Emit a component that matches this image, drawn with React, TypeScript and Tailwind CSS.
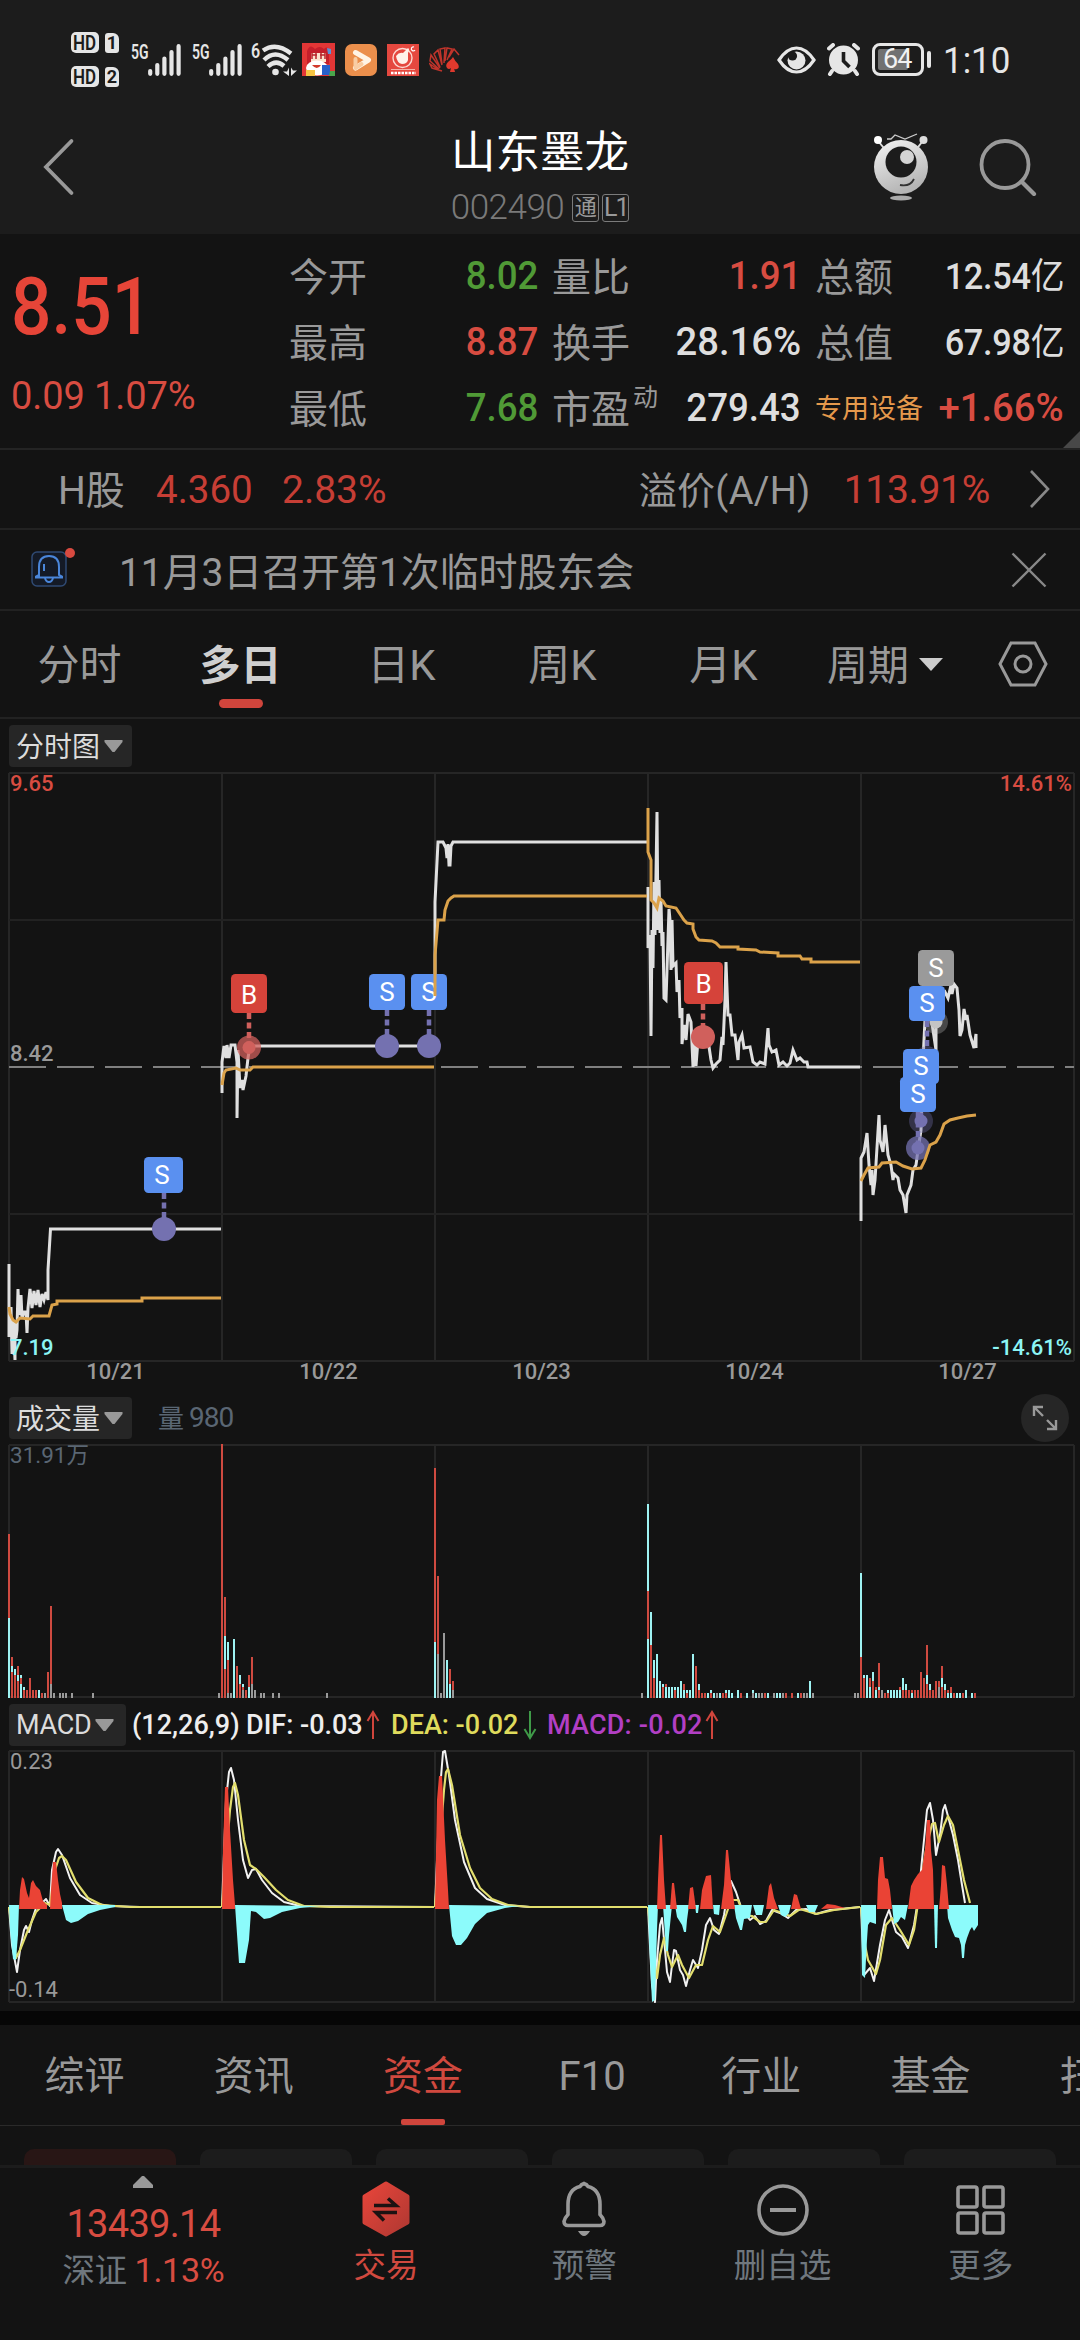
import { type ReactNode } from 'react';

const DAY_X = [9, 222, 435, 648, 861, 1074];
const DATES = ['10/21', '10/22', '10/23', '10/24', '10/27'];

/* ---------- chart data (canvas coordinates) ---------- */

const PRICE = [
  '9,1264 9,1337 11,1307 12,1354 13,1320 15,1360 15,1322 16,1338 17,1330 18,1289 19,1315 21,1295 22,1318 24,1312 26,1312 27,1333 28,1308 30,1289 32,1308 34,1291 36,1305 38,1290 40,1307 42,1294 44,1300 46,1292 48,1300 48,1270 50.5,1229 221,1229',
  '222,1093 222,1062 224,1046 226,1058 227,1045 229,1058 231,1045 235,1045 237,1062 237,1118 238,1050 240,1088 242,1080 243,1090 246,1076 248,1058 250,1046 434,1046',
  '435,985 435,902 438,842 443,842 446,848 447,858 448,844 449,865 450,865 451,846 453,842 647,842',
  '648,887 648,948 650,935 651,1036 652,930 653,968 654,882 655,935 657,812 658,930 659,880 660,933 661,900 662,946 663,932 664,998 666,1000 667,970 669,909 670,920 671,970 672,920 673,966 676,963 677,992 679,980 680,1018 682,1008 682,1044 684,1025 686,1040 688,1014 691,1022 693,1067 694,1040 696,1066 698,1040 702,1030 708,1040 711,1060 713,1068 716,1064 720,1060 722,1037 723,1045 725,1000 726,962 728,1015 730,1015 732,1035 735,1035 738,1060 739,1042 742,1035 744,1048 750,1047 753,1062 757,1065 760,1062 765,1064 767,1040 768,1028 769,1045 772,1052 776,1050 779,1065 783,1062 787,1066 790,1063 793,1050 797,1060 800,1058 804,1062 807,1062 808,1067 860,1067',
  '861,1221 861,1158 864,1152 867,1133 869,1165 871,1185 872,1170 873,1195 875,1180 879,1115 880,1140 883,1152 885,1125 888,1155 891,1165 893,1180 894,1174 898,1178 900,1190 903,1195 906,1213 907,1195 911,1185 913,1170 916,1165 918,1150 921,1130 923,1060 925,1020 930,1010 936,1050 936,1000 945,992 948,998 951,985 952,994 954,984 957,988 959,1010 960,1036 962,1030 964,1009 966,1020 967,1015 970,1035 974,1048 976,1034 976,1048',
];

const AVERAGE = [
  '9,1307 10,1314 13,1320 16,1322 20,1318 30,1319 33,1316 49,1316 52,1305 57,1304 57,1301 142,1301 142,1298 221,1298',
  '222,1085 224,1073 226,1070 236,1068 240,1070 250,1070 253,1067 434,1067',
  '435,996 435,955 438,920 444,920 445,910 448,901 451,898 454,896 647,896',
  '648,808 648,852 651,860 651,900 654,903 657,908 659,898 663,901 666,906 676,908 680,914 684,920 687,923 693,924 693,929 696,937 699,940 712,941 716,943 720,947 738,947 738,949 756,950 760,952 778,953 778,956 800,956 802,959 811,959 811,962 860,962',
  '861,1181 864,1175 868,1168 879,1167 882,1163 896,1162 903,1166 912,1169 921,1168 925,1160 930,1145 936,1142 940,1135 944,1124 950,1120 958,1118 967,1116 976,1115',
];

// x:segments, each segment is colour + height, painted back to front
const VOLUME = `9:r164c80 12:r41c32r26 15:c29r23 18:r32c23r17 21:c23r20c14 24:c11r8 27:r8 30:r20 33:r8 36:r8 39:c8 42:r5 45:g5
48:r26 51:r92g14 54:g5 60:g5 63:g5 66:g5 72:g5 93:g5
219:g5 222:r254 225:r101c62r29 228:c56r38g5 231:g5 234:c59 237:r32 240:c23r14 243:c14r11g8 246:r8 249:r23c11 252:r41g14 255:g8
261:g5 264:g5 273:g5 279:g5 327:g5
435:r230c56 438:r122g44 441:g5 444:g65 447:c38 450:r29c14 453:r17g8
642:g5 648:c194r107c59 651:c86r53 654:c38r20 657:c44 660:c17 663:c14r11 666:r14c11 669:c11 672:c11 675:c11r8 678:c11 681:c17
684:r14c8 687:c8r5 690:c8 693:c44 696:r32 699:c14r8 702:r5 705:r5 708:c5 711:c8r5 714:c5 717:g5 720:c5 723:r5 726:c8r5 729:c8
732:c5 738:c8 741:r5 747:c5 753:c8g5 756:c5 759:g5 762:g5 765:r5 768:c5 774:g5 777:c5 780:c5 783:g5 786:r5 792:r5 798:c5 801:r5
804:g5 807:g5 810:c17 813:g5
855:g5 858:g5 861:c125r41 864:c23r20 867:c23 870:r20c11 873:c26r17 876:r11c8 879:r35c11r8 882:g8 885:r5 888:c8r5 891:c8 894:c8
897:c8 900:r11c8 903:c20r8 906:c14r8 909:r8 912:r8c5 915:r8 918:r8 921:r26 924:r20 927:r53c23r14 930:c14r8 933:r8 936:r17
939:r17g11 942:r32c20r11 945:c14r8 948:r8c5 951:r11c5 954:r5 957:c5 960:c5 963:r5 966:c8 972:c5 975:r5`;

const FILL: Record<string, string> = { r: '#cf4a40', c: '#9ff3f3', g: '#9a9a9a' };

const MACD_DOWN = [
  '9,1905 10,1930 13,1959 16,1960 18,1935 19,1905',
  '62,1905 66,1920 71,1923 78,1921 88,1914 100,1910 115,1907 115,1905',
  '235,1905 239,1963 245,1963 249,1940 251,1911 256,1912 264,1919 270,1918 282,1912 300,1908 320,1906',
  '449,1905 452,1936 456,1945 461,1945 467,1938 475,1924 487,1913 505,1908 520,1906',
  '648,1905 649,1940 652,2002 655,2000 657,1930 658,1905',
  '663,1905 665,1935 666,1951 668,1951 669,1935 672,1905',
  '675,1905 677,1917 682,1925 684,1932 686,1932 687,1920 689,1905',
  '695,1905 696,1913 698,1913 699,1905',
  '713,1905 714,1914 719,1915 720,1905',
  '734,1905 736,1918 740,1930 742,1930 744,1919 750,1918 752,1905',
  '753,1905 756,1915 762,1915 764,1905',
  '778,1905 781,1915 785,1917 789,1913 791,1905',
  '806,1905 809,1912 815,1912 818,1905',
  '861,1905 862,1975 865,1978 867,1940 868,1925 870,1922 876,1924 876,1905',
  '892,1905 894,1924 898,1922 901,1917 905,1920 908,1905',
  '934,1905 935,1948 937,1948 938,1905',
  '947,1905 948,1918 952,1930 955,1937 959,1938 961,1945 962,1958 964,1958 965,1945 967,1938 970,1930 972,1927 974,1931 978,1925 978,1905',
];

const MACD_UP = [
  '19,1909 20,1890 22,1877 24,1879 27,1893 29,1898 31,1883 33,1880 36,1886 40,1890 43,1901 47,1905 47,1909',
  '50,1909 51,1890 53,1862 56,1862 58,1880 60,1894 62,1903 62,1909',
  '222,1909 223,1850 225,1787 228,1787 230,1830 233,1880 235,1905 235,1909',
  '435,1909 437,1800 439,1776 442,1776 445,1840 448,1890 449,1909',
  '657,1909 658,1880 660,1835 662,1835 664,1880 666,1909',
  '670,1909 672,1883 674,1883 677,1909',
  '688,1909 690,1888 693,1887 696,1909',
  '700,1909 702,1890 706,1876 711,1875 713,1909',
  '721,1909 724,1885 726,1850 728,1850 731,1880 735,1909',
  '766,1909 769,1886 771,1883 774,1898 778,1909',
  '791,1909 794,1894 797,1895 801,1909',
  '821,1909 827,1904 835,1905 845,1908',
  '877,1909 878,1880 880,1857 883,1857 885,1878 888,1879 890,1890 892,1909',
  '908,1909 911,1886 914,1880 918,1874 922,1870 925,1850 927,1820 930,1820 931,1850 933,1870 934,1909',
  '939,1909 941,1885 942,1865 945,1866 947,1885 949,1909',
];

const DIF = [
  '9,1907 12,1945 17,1972 20,1950 24,1930 26,1926 29,1932 32,1920 36,1908 42,1903 46,1899 50,1906 52,1870 56,1852 58,1849 62,1855 70,1878 80,1895 92,1903 110,1906 140,1907 221,1907',
  '222,1907 226,1800 229,1772 231,1768 234,1780 238,1820 243,1860 248,1878 252,1870 256,1869 262,1880 272,1893 284,1902 300,1906 434,1907',
  '435,1907 440,1790 443,1752 445,1751 449,1775 455,1820 464,1862 475,1888 487,1899 505,1905 530,1907 647,1907',
  '648,1907 652,1985 655,2002 657,1960 660,1925 662,1918 665,1950 667,1972 670,1982 672,1965 674,1950 676,1951 680,1970 683,1975 686,1986 690,1970 693,1960 698,1968 702,1950 706,1925 710,1918 714,1930 719,1934 724,1915 728,1890 731,1881 736,1892 742,1910 750,1920 755,1916 760,1924 766,1921 772,1910 780,1913 788,1918 796,1910 806,1909 816,1914 830,1910 860,1907',
  '861,1907 864,1975 870,1968 874,1981 880,1945 885,1920 889,1910 892,1920 896,1932 902,1937 908,1948 914,1925 918,1900 924,1840 927,1810 930,1803 933,1820 936,1855 940,1835 943,1810 945,1805 949,1820 953,1835 958,1860 962,1885 965,1903',
];

const DEA = [
  '9,1907 16,1958 20,1950 28,1930 36,1912 45,1903 50,1905 55,1870 59,1858 62,1856 66,1860 76,1882 88,1898 102,1905 130,1907 221,1907',
  '222,1907 230,1810 233,1787 235,1783 238,1795 244,1840 250,1865 256,1869 264,1877 276,1890 288,1900 304,1906 330,1907 434,1907',
  '435,1907 444,1790 446,1772 448,1769 452,1785 460,1835 470,1868 480,1888 492,1899 508,1905 530,1907 647,1907',
  '648,1907 654,1960 657,1978 660,1955 664,1938 668,1955 672,1967 678,1955 682,1965 689,1978 696,1965 702,1965 708,1940 713,1926 720,1932 726,1915 731,1900 738,1900 744,1915 752,1916 760,1922 766,1922 774,1910 782,1913 790,1916 800,1909 816,1914 834,1910 860,1907',
  '861,1907 864,1940 868,1960 876,1974 880,1960 886,1925 892,1918 900,1930 909,1945 914,1930 920,1890 926,1850 932,1824 935,1823 939,1842 944,1825 948,1816 953,1825 958,1850 964,1880 970,1903',
];

/* ---------- status bar ---------- */

function SimBadge({ n }: { n: number }) {
  return (
    <div className="flex h-[20px] items-center gap-[6px]">
      <span className="flex h-[21px] w-[28px] items-center justify-center rounded-[5px] bg-[#e6e6e6] text-[#1c1c1c]">
        <span className="scale-x-[0.85] text-[20px] font-semibold leading-[20px]">HD</span>
      </span>
      <span className="flex h-[20px] w-[14px] items-center justify-center rounded-[3px] rounded-tr-[6px] bg-[#e6e6e6] text-[18px] font-bold leading-[20px] text-[#1c1c1c]">
        {n}
      </span>
    </div>
  );
}

function Signal() {
  return (
    <div className="flex h-[32px] w-[50px] items-start">
      <span className="w-[17px] origin-left scale-x-[0.7] text-[20px] font-semibold leading-[16px] text-[#e6e6e6]">5G</span>
      <svg className="h-[32px] w-[33px] shrink-0" viewBox="0 0 33 32">
        <g stroke="#e6e6e6" strokeWidth="4.2" strokeLinecap="round">
          <path d="M2.2 27v2.8M9.3 21v8.8M16.4 14.5v15.3M23.5 8v21.8M30.6 2.2v27.6" />
        </g>
      </svg>
    </div>
  );
}

function StatusBar() {
  return (
    <div className="flex h-[119px] items-center pl-[71px] pr-[73px]">
      <div className="flex flex-col gap-[14px]">
        <SimBadge n={1} />
        <SimBadge n={2} />
      </div>
      <div className="ml-[12px] flex gap-[11px]">
        <Signal />
        <Signal />
      </div>
      <div className="ml-[9px] flex h-[34px] items-start">
        <span className="w-[9px] origin-left scale-x-[0.8] text-[20px] font-semibold leading-[16px] text-[#e6e6e6]">6</span>
        <svg className="h-[34px] w-[37px]" viewBox="9 0 37 34">
          <g fill="none" stroke="#e6e6e6" strokeWidth="4.4">
            <path d="M12 7.5Q25 -1.500 40 10.500" />
            <path d="M13 17Q24 6 37 17" />
            <path d="M17 23.500Q25 16 33 23" />
          </g>
          <circle cx="24.500" cy="29" r="3.300" fill="#e6e6e6" />
          <path d="M38 24.500v8.500l-6-4.500h4zM40 24.500v8.500l6-5.500h-4z" fill="#e6e6e6" />
        </svg>
      </div>
      <svg className="ml-[5px] size-[33px]" viewBox="0 0 33 33">
        <path d="M0 0h33v33H0z" fill="#e23636" />
        <path d="M5 8q3-8 8-2 5-4 9 0 4-4 5 3v12H5z" fill="#c41f2b" />
        <path d="M9 10h15v9H9z" fill="#fbe3cf" />
        <path d="M10 10v6M14 9v7M19 9v7M23 10v6M10 12h5M18 12h5" stroke="#b8262c" strokeWidth="1.500" />
        <ellipse cx="15" cy="25" rx="11" ry="7.500" fill="#fff" />
        <path d="M10 22h9q-4 6-9 0z" fill="#d13a2c" />
        <path d="M4 27h9v6H4z" fill="#f5c443" />
        <path d="M20 22h8v10h-8z" fill="#2760c9" />
        <path d="M28 28h5v5h-6z" fill="#4aa54b" />
        <path d="M25 5l4 1v5h-3z" fill="#5c92d6" />
      </svg>
      <svg className="ml-[10px] size-[32px]" viewBox="0 0 32 32">
        <rect width="32" height="32" rx="7" fill="#eb8f4c" />
        <path d="M10.500 8.500L23.500 16 10.500 24" fill="none" stroke="#fff4e6" strokeWidth="5" strokeLinejoin="round" strokeLinecap="round" />
        <path d="M10.500 15v9l6-4" fill="none" stroke="#f9cda3" strokeWidth="4" strokeLinejoin="round" strokeLinecap="round" />
      </svg>
      <svg className="ml-[10px] size-[32px]" viewBox="0 0 32 32">
        <path d="M0 0h32v32H0z" fill="#e5483f" />
        <circle cx="15.500" cy="14" r="9.500" fill="none" stroke="#fbd9d2" strokeWidth="1.400" />
        <path d="M9 12q3-4 7-3l5-5q2 1 0 5l0 7q-1 4-6 4-5-1-6-8z" fill="#fff2ea" />
        <path d="M27 3a2 2 0 1 0 1 3" fill="none" stroke="#fff" strokeWidth="1.200" />
        <path d="M4 25.500h24" stroke="#f5b1a6" />
        <path d="M4 29h25" stroke="#fff" strokeWidth="2.500" strokeDasharray="2.500 1" />
      </svg>
      <svg className="ml-[10px] h-[28px] w-[32px]" viewBox="0 0 32 28">
        <g fill="none" stroke="#c0342b" strokeWidth="1.500">
          <path d="M13 25L3 22l-2-4 9 6M10 23L1 15l1-6 9 13M11 21L5 8l4-4 4 15M13 18L11 3l5-1-1 15M16 15l2-13 5 1-5 11M20 11l5-8 5 6" />
        </g>
        <path d="M24 11q2 4 5 7 2 4-1 5-3 1-3-1l1 4h-5l1-4q-2 2-4 0-2-3 1-6 4-3 5-5z" fill="#df392d" />
      </svg>

      <div className="ml-auto flex items-center">
        <svg className="h-[28px] w-[39px]" viewBox="0 0 39 28">
          <path d="M2 14Q10 2 19.500 2T37 14Q29 26 19.500 26T2 14z" fill="none" stroke="#e6e6e6" strokeWidth="3.200" />
          <circle cx="19.500" cy="14.500" r="9" fill="#e6e6e6" />
          <circle cx="15.500" cy="10" r="4.600" fill="#1c1c1c" />
        </svg>
        <svg className="ml-[11px] size-[33px]" viewBox="0 0 33 33">
          <circle cx="16.500" cy="17" r="14.500" fill="#e6e6e6" />
          <path d="M2 5.500L6 2M27 2l4 3.500M5 28l-2 3M28 28l2 3" stroke="#e6e6e6" strokeWidth="4" strokeLinecap="round" />
          <path d="M16.500 9v9l6 6" fill="none" stroke="#1c1c1c" strokeWidth="3.600" />
        </svg>
        <div className="ml-[12px] flex h-[33px] w-[52px] items-center rounded-[8px] border-[3px] border-[#e6e6e6] p-[3px]">
          <div className="flex h-[21px] w-[30px] items-center rounded-[2px] bg-[#717171] pl-[5px] text-[27px] leading-[21px] tracking-[-1px] text-[#f2f2f2]">64</div>
        </div>
        <div className="ml-[3px] h-[17px] w-[4px] rounded-full bg-[#e6e6e6]" />
        <span className="ml-[12px] w-[64px] origin-left scale-x-[0.97] pt-[3px] text-[36px] leading-[40px] text-[#e6e6e6]">1:10</span>
      </div>
    </div>
  );
}

/* ---------- title bar ---------- */

function TitleBar() {
  return (
    <div className="grid h-[115px] grid-cols-[1fr_auto_1fr] items-start">
      <div className="flex h-[95px] items-center pl-[42px]">
        <svg className="h-[58px] w-[34px]" viewBox="0 0 34 58" fill="none" stroke="#999" strokeWidth="3.800" strokeLinecap="round">
          <path d="M29.500 3L4 29l25.500 26" />
        </svg>
      </div>
      <div className="flex flex-col items-center pt-[6px]">
        <h1 className="text-[44.500px] leading-[56px] text-white">山东墨龙</h1>
        <div className="flex h-[53px] items-center gap-[3px]">
          <span className="mr-[5px] text-[35px] font-light leading-[53px] tracking-[-0.500px] text-[#7a7a7a]">002490</span>
          <span className="flex h-[28px] w-[27px] items-center justify-center rounded-[3px] border border-[#7b7b7b] text-[22px] leading-[26px] text-[#999]">通</span>
          <span className="flex h-[28px] w-[27px] items-center justify-center rounded-[3px] border border-[#7b7b7b] text-[25px] leading-[26px] tracking-[-2px] text-[#999]">L1</span>
        </div>
      </div>
      <div className="flex h-[95px] items-center justify-end pr-[43px]">
        <svg className="h-[68px] w-[56px]" viewBox="0 0 56 68">
          <defs>
            <linearGradient id="robot" x1="0" y1="0" x2="0.400" y2="1">
              <stop offset="0" stopColor="#f4f4f4" />
              <stop offset="1" stopColor="#b5b5b5" />
            </linearGradient>
          </defs>
          <path d="M6 9l8 10M49 9l-7 9" stroke="#ddd" strokeWidth="2" />
          <path d="M14 6h4l4-4 10 4 12-5" fill="none" stroke="#ccc" strokeWidth="1.300" />
          <circle cx="5" cy="7" r="4" fill="#fff" />
          <circle cx="50.500" cy="7" r="4" fill="#ddd" />
          <circle cx="28" cy="34" r="27" fill="url(#robot)" />
          <circle cx="28" cy="29" r="15.500" fill="#1c1c1c" />
          <circle cx="34" cy="24" r="7" fill="#d4d4d4" />
          <path d="M27 52q10 2 14-6" fill="none" stroke="#333" strokeWidth="1.800" />
          <ellipse cx="28" cy="65" rx="11" ry="2.500" fill="#aaa" />
        </svg>
        <svg className="ml-[50px] size-[58px]" viewBox="0 0 58 58" fill="none" stroke="#999" strokeWidth="3.800">
          <circle cx="26" cy="26.500" r="23.500" />
          <path d="M42.500 43.500L55 56" strokeWidth="4.200" strokeLinecap="round" />
        </svg>
      </div>
    </div>
  );
}

/* ---------- quote ---------- */

type StatProps = { label: string; value: ReactNode; color: string; sup?: string; small?: boolean; wide?: boolean };

function Stat({ label, value, color, sup, small, wide }: StatProps) {
  return (
    <div className="flex h-[66px] items-center justify-between">
      <span className={small ? 'whitespace-nowrap pt-[3px] text-[27px] leading-[40px] text-[#e5994c]' : 'whitespace-nowrap pt-[6px] text-[39px] leading-[40px] text-[#999]'}>
        {label}
        {sup && <sup className="relative top-[-17px] ml-[3px] align-baseline text-[25px] leading-none">{sup}</sup>}
      </span>
      <span className={`origin-right whitespace-nowrap pt-[2px] text-[39px] font-medium leading-[40px] ${wide ? 'scale-x-[0.98]' : 'scale-x-[0.94]'} ${color}`}>{value}</span>
    </div>
  );
}

const yi = (n: string) => (
  <span className="text-[36.500px] tracking-[-0.300px]">
    {n}
    <span className="text-[36px] font-normal">亿</span>
  </span>
);

function Quote() {
  return (
    <section className="relative flex h-[216px] border-b-2 border-[#242424] pr-[16px]">
      <div className="w-[289px] pl-[11px]">
        <div className="mt-[28px] h-[90px] origin-left scale-x-[0.89] text-[80px] font-medium leading-[90px] text-[#e64538]">8.51</div>
        <div className="mt-[24px] text-[38px] leading-[40px] tracking-[-0.100px] text-[#d84c41]">0.09 1.07%</div>
      </div>
      <div className="w-[249px] pt-[8px]">
        <Stat label="今开" value="8.02" color="text-[#509a36]" />
        <Stat label="最高" value="8.87" color="text-[#d84c41]" />
        <Stat label="最低" value="7.68" color="text-[#509a36]" />
      </div>
      <div className="ml-[14px] w-[249px] pt-[8px]">
        <Stat label="量比" value="1.91" color="text-[#d84c41]" />
        <Stat label="换手" value="28.16%" color="text-[#dedede]" wide />
        <Stat label="市盈" sup="动" value="279.43" color="text-[#dedede]" />
      </div>
      <div className="ml-[14px] w-[249px] pt-[8px]">
        <Stat label="总额" value={yi('12.54')} color="text-[#dedede]" />
        <Stat label="总值" value={yi('67.98')} color="text-[#dedede]" />
        <Stat label="专用设备" small value="+1.66%" color="text-[#d84c41]" wide />
      </div>
      <svg className="absolute bottom-0 right-0 size-[17px]" viewBox="0 0 17 17">
        <path d="M17 0v17H0z" fill="#484848" />
      </svg>
    </section>
  );
}

function HShareRow() {
  return (
    <div className="flex h-[80px] items-center border-b-2 border-[#222] pl-[58px] pr-[29px] text-[39px] leading-[44px]">
      <span className="w-[98px] pt-[4px] text-[39px] text-[#999]">H股</span>
      <span className="w-[126px] pt-[2px] text-[38.500px] text-[#c63e35]">4.360</span>
      <span className="pt-[2px] text-[#c63e35]">2.83%</span>
      <span className="ml-auto pt-[4px] text-[38px] tracking-[0.300px] text-[#999]">溢价(A/H)</span>
      <span className="ml-[33px] pt-[2px] tracking-[-0.300px] text-[#c63e35]">113.91%</span>
      <svg className="ml-[39px] h-[40px] w-[22px]" viewBox="0 0 22 40" fill="none" stroke="#888" strokeWidth="2.600">
        <path d="M2 2l17 18L2 38" />
      </svg>
    </div>
  );
}

function NoticeRow() {
  return (
    <div className="flex h-[81px] items-center border-b-2 border-[#222] pl-[31px] pr-[33px]">
      <svg className="mb-[3px] h-[42px] w-[46px]" viewBox="0 0 46 42">
        <rect x="1" y="5" width="34" height="34" rx="5" fill="#141a26" stroke="#2f4a73" strokeWidth="1.500" />
        <path d="M8 30V20q0-11 10-11t10 11v8l3 1.500v1H5v-1L8 28" fill="none" stroke="#4a86da" strokeWidth="2" />
        <path d="M14 31q1 4 4 4t4-4M13 17v7" fill="none" stroke="#4a86da" strokeWidth="2" />
        <circle cx="39" cy="6" r="5" fill="#d84a40" />
      </svg>
      <span className="ml-[42px] pt-[6px] text-[39px] leading-[44px] tracking-[-0.100px] text-[#999]">11月3日召开第1次临时股东会</span>
      <svg className="ml-auto size-[36px]" viewBox="0 0 36 36" stroke="#888" strokeWidth="2.400">
        <path d="M1.500 1.500l33 33M34.500 1.500l-33 33" />
      </svg>
    </div>
  );
}

function PeriodTabs() {
  const tabs = ['分时', '多日', '日K', '周K', '月K'];
  return (
    <div className="flex h-[108px] items-center border-b-2 border-[#222]">
      {tabs.map((t) => (
        <div key={t} className="relative flex h-full w-[161px] items-center justify-center pt-[3px] pr-[2px]">
          <span className={t === '多日' ? 'text-[41px] font-bold leading-[44px] text-[#cfcfcf]' : 'text-[42px] leading-[44px] text-[#999]'}>{t}</span>
          {t === '多日' && <i className="absolute bottom-[9px] left-[58px] h-[9px] w-[44px] rounded-full bg-[#d0453c]" />}
        </div>
      ))}
      <div className="ml-[22px] flex items-center gap-[10px]">
        <span className="pt-[3px] text-[41px] leading-[44px] text-[#999]">周期</span>
        <svg className="h-[13px] w-[24px]" viewBox="0 0 24 13">
          <path d="M0 0h24L12 13z" fill="#ccc" />
        </svg>
      </div>
      <svg className="ml-[55px] h-[46px] w-[50px]" viewBox="0 0 50 46" fill="none" stroke="#999" strokeWidth="3">
        <path d="M13 2h24l11 21-11 21H13L2 23z" />
        <circle cx="25" cy="23" r="8" />
      </svg>
    </div>
  );
}

/* ---------- charts ---------- */

function Chip({ children, className }: { children: ReactNode; className?: string }) {
  return (
    <div className={`flex h-[42px] items-center gap-[4px] rounded-[4px] bg-[#262626] pl-[7px] leading-[36px] text-[#dcdcdc] ${className}`}>
      {children}
      <svg className="h-[12px] w-[19px]" viewBox="0 0 18 12">
        <path d="M0 0h18v2L10 12H8L0 2z" fill="#999" />
      </svg>
    </div>
  );
}

function Frame({ top, bottom }: { top: number; bottom: number }) {
  return (
    <g stroke="#262626" strokeWidth="2">
      <path d={`M9 ${top}H1074M9 ${bottom}H1074`} />
      {DAY_X.map((x) => (
        <path key={x} d={`M${x} ${top}V${bottom}`} />
      ))}
    </g>
  );
}

type Mark = { x: number; y: number; w: number; h: number; t: string; bg: string; dx: number; dy: number; dot: string; halo: number };

const MARKS: Mark[] = [
  { x: 144, y: 1157, w: 39, h: 36, t: 'S', bg: '#5a90f0', dx: 164, dy: 1229, dot: '#7471b0', halo: 1 },
  { x: 231, y: 974, w: 36, h: 39, t: 'B', bg: '#d5433a', dx: 249, dy: 1047.5, dot: '#d0605c', halo: 0.75 },
  { x: 369, y: 974, w: 36, h: 36, t: 'S', bg: '#5a90f0', dx: 387, dy: 1046, dot: '#7471b0', halo: 1 },
  { x: 411, y: 974, w: 36, h: 36, t: 'S', bg: '#5a90f0', dx: 429, dy: 1046, dot: '#7471b0', halo: 1 },
  { x: 684, y: 962, w: 39, h: 42, t: 'B', bg: '#d5433a', dx: 703, dy: 1037, dot: '#d0605c', halo: 1 },
  { x: 918, y: 950, w: 36, h: 36, t: 'S', bg: '#9a9a9a', dx: 936, dy: 1022, dot: '#c4c4c4', halo: 0.3 },
  { x: 909, y: 986, w: 36, h: 35, t: 'S', bg: '#5a90f0', dx: 927, dy: 1058, dot: '#7471b0', halo: 0.4 },
  { x: 903, y: 1049, w: 36, h: 35, t: 'S', bg: '#5a90f0', dx: 921, dy: 1121, dot: '#7471b0', halo: 0.35 },
  { x: 900, y: 1077, w: 36, h: 35, t: 'S', bg: '#5a90f0', dx: 918, dy: 1148, dot: '#7471b0', halo: 0.75 },
];

function PriceChart() {
  return (
    <svg className="block h-[620px] w-full" viewBox="0 768 1080 620">
      <Frame top={773} bottom={1361} />
      <path d="M9 920H1074M9 1214H1074" stroke="#222" strokeWidth="2" />
      <path d="M9 1067H1074" stroke="#808080" strokeWidth="1.800" strokeDasharray="37 11" />
      <g fill="none" stroke="#e0e0e0" strokeWidth="3">
        {PRICE.map((p) => (
          <polyline key={p} points={p} />
        ))}
      </g>
      {MARKS.map((m, i) => (
        <g key={i}>
          <path d={`M${m.dx} ${m.y + m.h}V${m.dy}`} stroke={m.dot} strokeWidth="4.500" strokeDasharray="6 3.500" />
          <circle cx={m.dx} cy={m.dy} r="12" fill={m.dot} opacity={m.halo} />
          {m.halo < 1 && <circle cx={m.dx} cy={m.dy} r="6.500" fill={m.dot} />}
        </g>
      ))}
      {MARKS.map((m, i) => (
        <g key={i}>
          <rect x={m.x} y={m.y} width={m.w} height={m.h} rx="4.500" fill={m.bg} />
          <text x={m.x + m.w / 2 - (i === 0 ? 1.5 : 0)} y={m.y + m.h / 2 + (m.t === 'B' ? 10 : 8.5)} textAnchor="middle" fill="#fff" fontSize="26">
            {m.t}
          </text>
        </g>
      ))}
      <g fill="none" stroke="#dba24a" strokeWidth="3">
        {AVERAGE.map((p) => (
          <polyline key={p} points={p} />
        ))}
      </g>
      <g fontSize="22" fontWeight="500">
        <text x="10" y="791" fill="#d84c41">9.65</text>
        <text x="1072" y="791" fill="#d84c41" textAnchor="end">14.61%</text>
        <text x="10" y="1061" fill="#999">8.42</text>
        <text x="10" y="1355" fill="#8cf5f5">7.19</text>
        <text x="1072" y="1355" fill="#8cf5f5" textAnchor="end">-14.61%</text>
        {DATES.map((d, i) => (
          <text key={d} x={115.5 + i * 213} y="1379" fill="#999" textAnchor="middle">
            {d}
          </text>
        ))}
      </g>
    </svg>
  );
}

function VolumeChart() {
  const bars = VOLUME.split(/\s+/).flatMap((item) => {
    const [x, segs] = item.split(':');
    return [...segs.matchAll(/([rcg])(\d+)/g)].map((s) => ({ x: Number(x), c: s[1], h: Number(s[2]) }));
  });
  return (
    <svg className="block h-[262px] w-full" viewBox="0 1441 1080 262">
      <Frame top={1445} bottom={1697} />
      {bars.map((b, i) => (
        <rect key={i} x={b.x - 1} y={1698 - b.h} width="2" height={b.h} fill={FILL[b.c]} shapeRendering="crispEdges" />
      ))}
      <text x="10" y="1463" fill="#5a6673" fontSize="22.500">31.91万</text>
    </svg>
  );
}

function MacdChart() {
  return (
    <svg className="block h-[264px] w-full" viewBox="0 1747 1080 264">
      <Frame top={1751} bottom={2002} />
      <g fill="none" stroke="#f2f2f2" strokeWidth="2">
        {DIF.map((p) => (
          <polyline key={p} points={p} strokeLinejoin="round" />
        ))}
      </g>
      <g fill="none" stroke="#e2de6e" strokeWidth="2.200">
        {DEA.map((p) => (
          <polyline key={p} points={p} strokeLinejoin="round" />
        ))}
      </g>
      {MACD_DOWN.map((p) => (
        <polygon key={p} points={p} fill="#8cfbfb" />
      ))}
      {MACD_UP.map((p) => (
        <polygon key={p} points={p} fill="#ea4335" />
      ))}
      <g fill="#999" fontSize="22">
        <text x="10" y="1769">0.23</text>
        <text x="9" y="1997">-0.14</text>
      </g>
    </svg>
  );
}

function Arrow({ up }: { up?: boolean }) {
  return (
    <svg className="h-[30px] w-[14px] shrink-0" viewBox="0 0 14 30" fill="none" stroke={up ? '#d0453c' : '#3f9a48'} strokeWidth="2">
      {up ? <path d="M7 29V2M1.500 11L7 2l5.500 9" /> : <path d="M7 1v27M1.500 19L7 28l5.500-9" />}
    </svg>
  );
}

/* ---------- bottom ---------- */

function SectionTabs() {
  const tabs = ['综评', '资讯', '资金', 'F10', '行业', '基金', '扫雷'];
  return (
    <div className="flex h-[101px] overflow-hidden border-b border-[#2a2a2a]">
      {tabs.map((t) => (
        <div key={t} className={`relative flex h-full w-[169.200px] shrink-0 items-center justify-center pt-[4px] text-[40px] leading-[44px] ${t === '资金' ? 'text-[#d0493f]' : 'text-[#999]'}`}>
          {t}
          {t === '资金' && <i className="absolute bottom-0 left-[63px] h-[6px] w-[44px] rounded-[2px] bg-[#d0453c]" />}
        </div>
      ))}
    </div>
  );
}

function NavItem({ label, children, active }: { label: string; children: ReactNode; active?: boolean }) {
  return (
    <div className="flex w-[198.500px] flex-col items-center pt-[12px]">
      <svg className="h-[58px] w-[58px]" viewBox="0 0 58 58" fill="none" stroke="#999" strokeWidth="3.600">
        {children}
      </svg>
      <span className={`mt-[8px] text-[32.500px] leading-[40px] ${active ? 'text-[#d0493f]' : 'text-[#6f777e]'}`}>{label}</span>
    </div>
  );
}

function BottomNav() {
  return (
    <nav className="flex h-[175px] border-t-[3px] border-[#1c1c1c]">
      <div className="flex w-[287px] flex-col items-center pt-[8px]">
        <svg className="h-[12px] w-[20px]" viewBox="0 0 20 12">
          <path d="M9 0h2l9 9v3H0V9z" fill="#999" />
        </svg>
        <span className="mt-[15px] text-[38px] leading-[42px] tracking-[-0.700px] text-[#d84c41]">13439.14</span>
        <span className="mt-[5px] text-[32.500px] leading-[40px] tracking-[-0.300px] text-[#6f777e]">
          深证 <span className="text-[34px] text-[#d84c41]">1.13%</span>
        </span>
      </div>
      <NavItem label="交易" active>
        <defs>
          <linearGradient id="trade" x1="0" y1="0" x2="1" y2="1">
            <stop offset="0" stopColor="#e8453a" />
            <stop offset="1" stopColor="#b03832" />
          </linearGradient>
        </defs>
        <path d="M29 3.500l21.500 13v26L29 54.500 7.500 42.500v-26z" fill="url(#trade)" stroke="url(#trade)" strokeWidth="4" strokeLinejoin="round" />
        <path d="M17 25.500h22l-8-7M40 32.500H19l8 8" stroke="#1c1212" strokeWidth="3.500" />
      </NavItem>
      <NavItem label="预警">
        <path d="M29 3.500q3 1 4 3 12 3 12 18v10q3 3 4 7 0 4-4 4H13q-4 0-4-4 1-4 4-7v-10q0-15 12-18 1-2 4-3z" />
        <path d="M23 51h12q-3 5-6 5t-6-5z" fill="#999" stroke="none" />
      </NavItem>
      <NavItem label="删自选">
        <circle cx="29" cy="30" r="24" />
        <path d="M16 30h26" strokeWidth="4" />
      </NavItem>
      <NavItem label="更多">
        <rect x="6" y="7" width="19" height="20" rx="2" />
        <rect x="32" y="7" width="19" height="20" rx="2" />
        <rect x="6" y="33" width="19" height="20" rx="2" />
        <rect x="32" y="33" width="19" height="20" rx="2" />
      </NavItem>
    </nav>
  );
}

export default function App() {
  return (
    <div className="h-[2340px] w-[1080px] overflow-hidden bg-[#131313] font-[Roboto,'Noto_Sans_CJK_SC',sans-serif]">
      <header className="h-[234px] bg-[#1c1c1c]">
        <StatusBar />
        <TitleBar />
      </header>
      <Quote />
      <HShareRow />
      <NoticeRow />
      <PeriodTabs />

      {/* intraday */}
      <div className="h-[49px] pl-[9px] pt-[6px]">
        <Chip className="w-[123px] text-[28px]">
          <span className="pt-[3px]">分时图</span>
        </Chip>
      </div>
      <PriceChart />

      {/* volume */}
      <div className="flex h-[53px] items-start pl-[9px] pr-[11px] pt-[9px]">
        <Chip className="w-[123px] text-[28px]">
          <span className="pt-[3px]">成交量</span>
        </Chip>
        <span className="ml-[26px] pt-[2px] text-[26px] leading-[40px] text-[#5a6673]">量</span>
        <span className="ml-[5px] text-[28px] leading-[42px] tracking-[-1px] text-[#5a6673]">980</span>
        <div className="-mt-[3px] ml-auto flex size-[48px] items-center justify-center rounded-full bg-[#262626]">
          <svg className="size-[26px]" viewBox="0 0 26 26" fill="none" stroke="#999" strokeWidth="2.400">
            <path d="M2 11V2h9M2 2l9 9M24 15v9h-9M24 24l-9-9" />
          </svg>
        </div>
      </div>
      <VolumeChart />

      {/* macd */}
      <div className="flex h-[44px] items-center pl-[9px] text-[27px] font-medium leading-[36px]">
        <Chip className="w-[117px] shrink-0 font-normal">
          <span className="tracking-[-0.300px]">MACD</span>
        </Chip>
        <span className="ml-[6px] w-[114px] shrink-0 text-[#eee]">(12,26,9)</span>
        <span className="w-[120px] shrink-0 whitespace-nowrap text-[#eee]">DIF: -0.03</span>
        <Arrow up />
        <span className="ml-[11px] w-[132px] shrink-0 whitespace-nowrap text-[#dfdb5c]">DEA: -0.02</span>
        <Arrow />
        <span className="ml-[10px] w-[158px] shrink-0 whitespace-nowrap tracking-[0.200px] text-[#b23fc4]">MACD: -0.02</span>
        <Arrow up />
      </div>
      <MacdChart />

      <div className="h-[14px] bg-[#060606]" />
      <SectionTabs />
      <div className="flex h-[39px] gap-[24px] overflow-hidden pl-[24px] pt-[23px]">
        {[0, 1, 2, 3, 4, 5].map((i) => (
          <div key={i} className={`h-[40px] w-[152px] shrink-0 rounded-[10px] ${i === 0 ? 'bg-[#281615]' : 'bg-[#1c1c1c]'}`} />
        ))}
      </div>
      <BottomNav />
    </div>
  );
}
